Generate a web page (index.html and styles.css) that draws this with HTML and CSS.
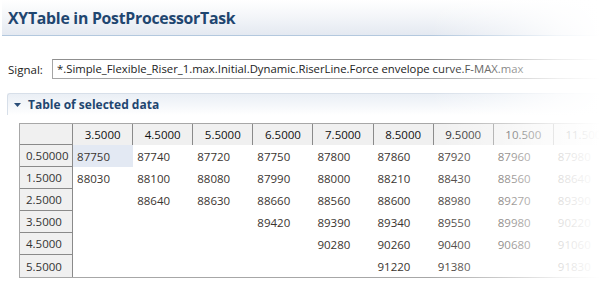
FILE: index.html
```html
<!DOCTYPE html>
<html>
<head>
<meta charset="utf-8">
<link rel="stylesheet" href="styles.css">
</head>
<body>
<div class="page">
  <div class="titlebar"><h1 class="title">XYTable in PostProcessorTask</h1></div>
  <div class="signal-row">
    <label class="signal-label">Signal:</label>
    <div class="signal-input">*.Simple_Flexible_Riser_1.max.Initial.Dynamic.RiserLine.Force envelope curve.F-MAX.max</div>
  </div>
  <div class="section">
    <div class="section-head">
      <svg class="twisty" width="7" height="4" viewBox="0 0 7 4"><path d="M0 0H7L3.5 4Z" fill="#2b4e78"/></svg>
      <span class="section-title">Table of selected data</span>
    </div>
    <table class="grid">
      <colgroup><col class="c-rh"><col class="c"><col class="c"><col class="c"><col class="c"><col class="c"><col class="c"><col class="c"><col class="c"><col class="c"></colgroup>
      <thead>
        <tr><th class="corner"></th><th>3.5000</th><th>4.5000</th><th>5.5000</th><th>6.5000</th><th>7.5000</th><th>8.5000</th><th>9.5000</th><th>10.500</th><th>11.500</th></tr>
      </thead>
      <tbody>
        <tr><td class="rh">0.50000</td><td class="sel">87750</td><td>87740</td><td>87720</td><td>87750</td><td>87800</td><td>87860</td><td>87920</td><td>87960</td><td>87980</td></tr>
        <tr><td class="rh">1.5000</td><td>88030</td><td>88100</td><td>88080</td><td>87990</td><td>88000</td><td>88210</td><td>88430</td><td>88560</td><td>88640</td></tr>
        <tr><td class="rh">2.5000</td><td></td><td>88640</td><td>88630</td><td>88660</td><td>88560</td><td>88600</td><td>88980</td><td>89270</td><td>89390</td></tr>
        <tr><td class="rh">3.5000</td><td></td><td></td><td></td><td>89420</td><td>89390</td><td>89340</td><td>89550</td><td>89980</td><td>90220</td></tr>
        <tr><td class="rh">4.5000</td><td></td><td></td><td></td><td></td><td>90280</td><td>90260</td><td>90400</td><td>90680</td><td>91060</td></tr>
        <tr><td class="rh last">5.5000</td><td></td><td></td><td></td><td></td><td></td><td>91220</td><td>91380</td><td></td><td>91830</td></tr>
      </tbody>
    </table>
  </div>
  <div class="fade"></div>
</div>
</body>
</html>
```
FILE: styles.css
```css
html, body {
  margin: 0;
  padding: 0;
  background: #fff;
}
body {
  width: 600px;
  height: 295px;
  overflow: hidden;
  font-family: "Open Sans", "Noto Sans", sans-serif;
  font-size: 11px;
  color: #333;
}
.page {
  position: relative;
  width: 600px;
  height: 295px;
  overflow: hidden;
}
.titlebar {
  height: 35px;
  margin-left: 2px;
  border-bottom: 1px solid #b3c8de;
  background: linear-gradient(to bottom, #ffffff 0%, #f4f6f9 45%, #e4e9f1 100%);
  display: flex;
  align-items: center;
  padding-left: 6px;
}
.title {
  margin: 0;
  font-size: 15.8px;
  font-weight: 700;
  color: #1f4670;
  letter-spacing: -0.25px;
}
.signal-row {
  display: flex;
  align-items: center;
  margin-top: 23px;
  height: 20px;
}
.signal-label {
  flex: none;
  box-sizing: border-box;
  width: 52px;
  padding-left: 8px;
  color: #222;
  font-size: 11.5px;
}
.signal-input {
  flex: none;
  width: 600px;
  height: 18px;
  border: 1px solid #a5a5a5;
  border-top-color: #8f8f8f;
  padding-left: 4px;
  line-height: 18px;
  font-size: 11.3px;
  color: #222;
  white-space: nowrap;
}
.section {
  margin: 14px 0 0 7px;
}
.section-head {
  height: 21px;
  display: flex;
  align-items: center;
  border-top: 1px solid #d7dfe9;
  border-left: 1px solid #d7dfe9;
  border-top-left-radius: 3px;
  background: linear-gradient(to bottom, #eaeff5 0%, #f6f8fb 60%, #ffffff 100%);
  padding-left: 6px;
}
.twisty {
  margin-right: 7px;
}
.section-title {
  font-size: 12px;
  font-weight: 700;
  color: #1f4670;
}
.grid {
  margin: 8px 0 0 12px;
  border-collapse: separate;
  border-spacing: 0;
  table-layout: fixed;
  width: 595px;
  border: 1px solid #a7a7a7;
  border-right: none;
}
.c-rh { width: 53px; }
.c { width: 60px; }
.grid th {
  height: 21px;
  padding: 0;
  background: #f0f0f0;
  border-right: 1px solid #8a8a8a;
  font-weight: 400;
  font-size: 11.5px;
  color: #111;
  text-align: center;
  box-sizing: border-box;
}
.grid th.corner {
  border-bottom: 1px solid #8a8a8a;
}
.grid td {
  height: 22px;
  padding: 0 0 0 4px;
  box-sizing: border-box;
  font-size: 11.5px;
  color: #3a3430;
  white-space: nowrap;
  overflow: hidden;
}
.grid td.rh {
  background: #f0f0f0;
  border-right: 1px solid #8a8a8a;
  border-bottom: 1px solid #8a8a8a;
  padding-left: 6px;
  color: #333;
}
.grid td.rh.last {
  border-bottom: none;
}
.grid td.sel {
  background: #e3e9f3;
}
.fade {
  position: absolute;
  top: 0;
  right: 0;
  width: 170px;
  height: 295px;
  background: linear-gradient(to right, rgba(255,255,255,0) 0%, rgba(255,255,255,0.4) 40%, rgba(255,255,255,0.82) 75%, rgba(255,255,255,1) 100%);
  pointer-events: none;
}
```
